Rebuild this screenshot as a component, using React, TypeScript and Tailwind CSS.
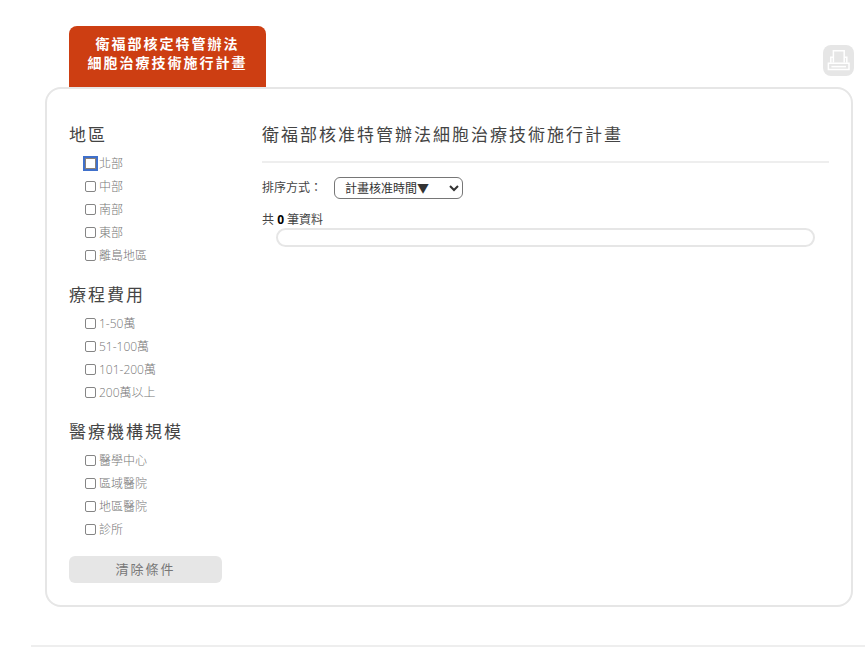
import React from 'react';

const groups = [
  { title: '地區', items: ['北部', '中部', '南部', '東部', '離島地區'] },
  { title: '療程費用', items: ['1-50萬', '51-100萬', '101-200萬', '200萬以上'] },
  { title: '醫療機構規模', items: ['醫學中心', '區域醫院', '地區醫院', '診所'] },
];

function PrinterIcon() {
  return (
    <svg width="31" height="31" viewBox="0 0 31 31" fill="none" stroke="#ffffff" strokeWidth="1.5" aria-hidden="true">
      <path d="M10.4 17.6V5.8h10.8v11.8" />
      <path d="M10.4 12.2H7.8v5.6M21.2 12.2h2.6v5.6" />
      <path d="M5.4 18.2h20.6v6.4H5.4z" />
      <path d="M8.4 21.6h14.6" />
    </svg>
  );
}

function FilterGroup({ title, items, first }: { title: string; items: string[]; first: boolean }) {
  return (
    <fieldset className="mb-3.5">
      <legend className="mb-[3px] h-7 text-[17px] leading-7 tracking-[2px] text-[#444444]">{title}</legend>
      <div className="pl-4">
        {items.map((item, i) => (
          <label key={item} className="flex h-[23px] items-center gap-[3px] text-xs font-light text-[#777777]">
            <input
              type="checkbox"
              className={
                first && i === 0
                  ? 'size-[11px] appearance-none border border-[#8a8078] bg-white outline-2 outline-[#3f70cb]'
                  : 'size-[11px] appearance-none rounded-xs border border-[#858585] bg-white'
              }
            />
            <span>{item}</span>
          </label>
        ))}
      </div>
    </fieldset>
  );
}

export default function App() {
  return (
    <div className="bg-white pt-[26px] font-['Open_Sans','Noto_Sans_CJK_TC',sans-serif] text-[#444444]">
      <div className="ml-[45px] mr-3">
        <header className="flex items-start justify-between pl-6">
          <h1 className="h-[61px] w-[197px] rounded-t-lg bg-[#cd3e12] pt-2 text-center text-sm leading-[19px] font-bold tracking-[2px] text-white">
            衛福部核定特管辦法
            <br />
            細胞治療技術施行計畫
          </h1>
          <button type="button" aria-label="列印" className="mt-[19px] -mr-px rounded-lg bg-[#e6e6e6]">
            <PrinterIcon />
          </button>
        </header>

        <main className="flex gap-10 rounded-2xl border-2 border-[#e6e6e6] px-[22px] pt-8 pb-[22px]">
          <aside className="w-[153px] shrink-0">
            {groups.map((g, i) => (
              <FilterGroup key={g.title} title={g.title} items={g.items} first={i === 0} />
            ))}
            <button
              type="button"
              className="mt-px h-[27px] w-full rounded-md bg-[#e6e6e6] text-[13px] tracking-[2px] text-[#777777]"
            >
              清除條件
            </button>
          </aside>

          <section className="min-w-0 flex-1">
            <h2 className="border-b-2 border-[#eeeeee] pb-3 text-[17px] leading-7 tracking-[2px]">
              衛福部核准特管辦法細胞治療技術施行計畫
            </h2>
            <div className="mt-3.5 flex items-center text-xs">
              <label htmlFor="sort" className="w-[72px]">
                排序方式：
              </label>
              <select
                id="sort"
                className="h-[22px] w-[129px] rounded-md border border-[#767676] bg-white pl-1.5 text-xs text-[#333333]"
              >
                <option>計畫核准時間▼</option>
              </select>
            </div>
            <p className="mt-[13px] text-xs leading-4">
              共 <strong className="font-bold text-black">0</strong> 筆資料
            </p>
            <div className="mx-3.5 h-[19px] rounded-full border-2 border-[#e6e6e6]" />
          </section>
        </main>
      </div>
      <footer className="mt-[38px] ml-[31px] border-t-2 border-[#eeeeee]" />
    </div>
  );
}
